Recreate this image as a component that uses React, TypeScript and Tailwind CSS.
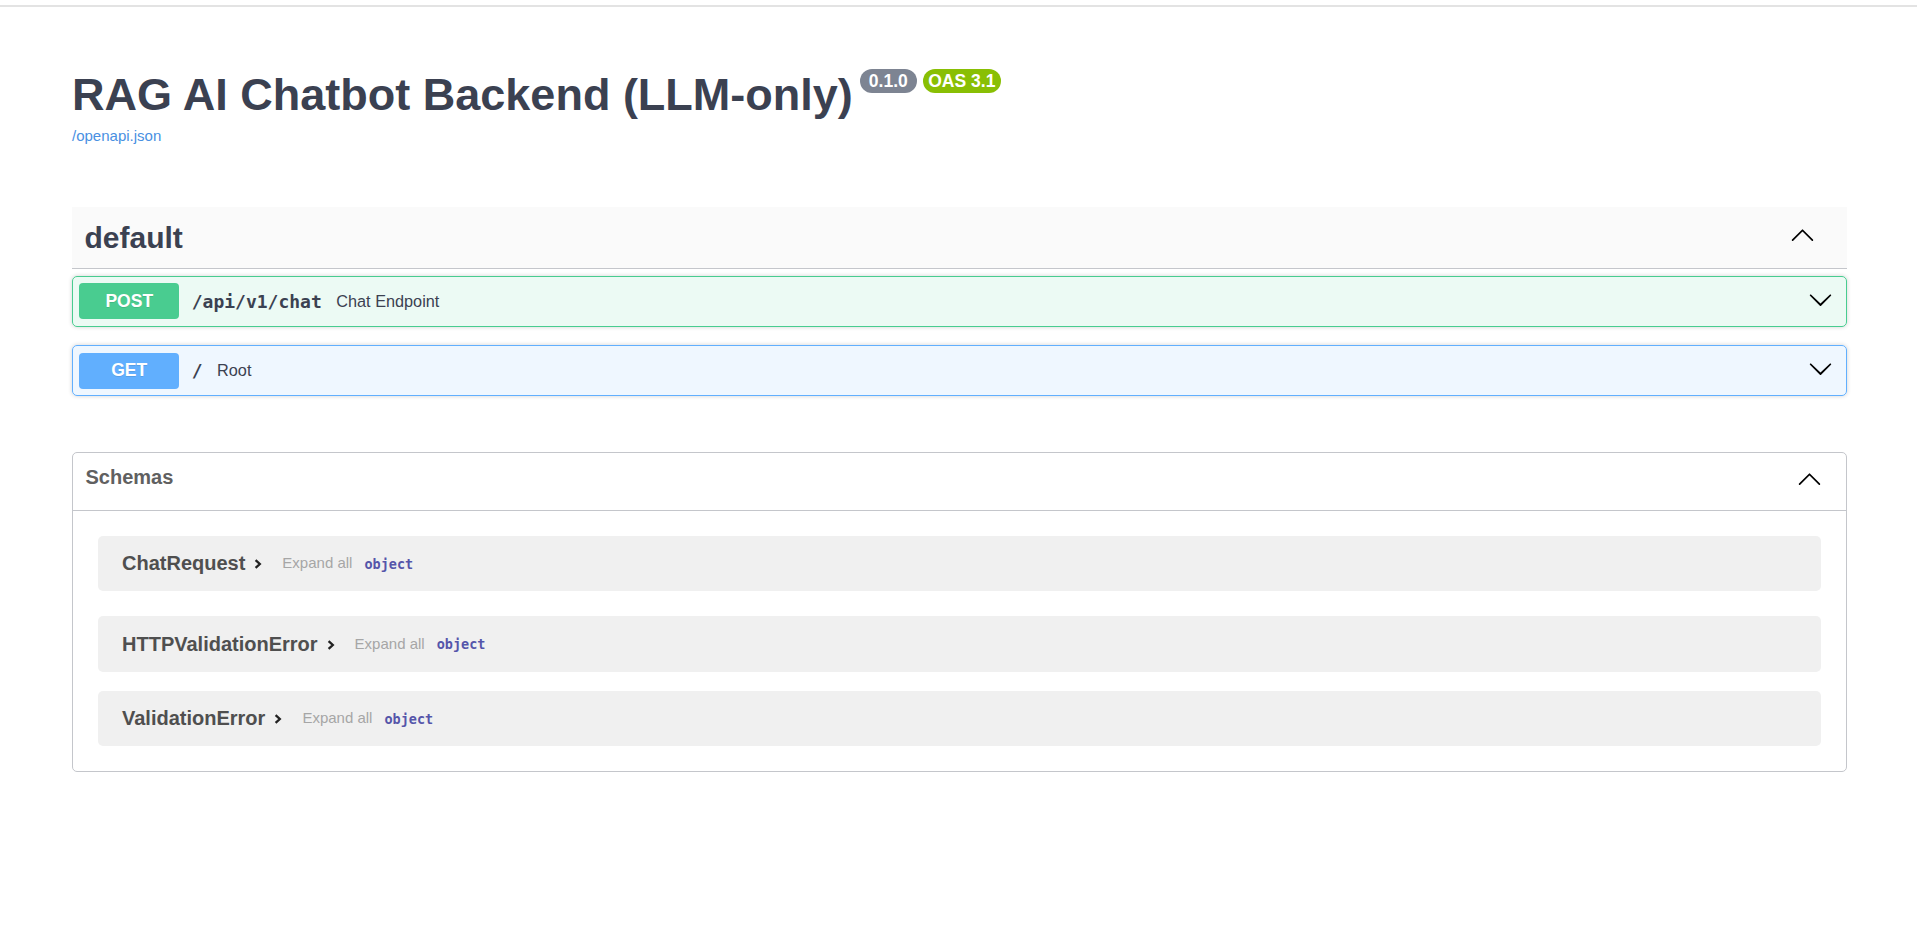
import React from "react"

const SANS = "font-['Liberation_Sans',Arial,sans-serif]"

const ArrowUp = () => (
  <svg width="25" height="25" viewBox="0 0 20 20" className="fill-black shrink-0">
    <path d="M17.418 14.908c.272.268.709.268.979 0s.271-.701 0-.969l-7.908-7.83a.697.697 0 0 0-.979 0l-7.908 7.83a.68.68 0 0 0 0 .969c.271.268.709.268.979 0L10 7.5l7.418 7.408z" />
  </svg>
)

const ArrowDown = () => (
  <svg width="25" height="25" viewBox="0 0 20 20" className="fill-black shrink-0">
    <path d="M17.418 6.109c.272-.268.709-.268.979 0s.271.701 0 .969l-7.908 7.83a.697.697 0 0 1-.979 0l-7.908-7.83c-.27-.268-.27-.701 0-.969.271-.268.709-.268.979 0L10 13.25l7.418-7.141z" />
  </svg>
)

const ops = [
  {
    method: "POST",
    path: "/api/v1/chat",
    desc: "Chat Endpoint",
    box: "border-[#49cc90] bg-[#49cc90]/10",
    badge: "bg-[#49cc90]",
  },
  {
    method: "GET",
    path: "/",
    desc: "Root",
    box: "border-[#61affe] bg-[#61affe]/10",
    badge: "bg-[#61affe]",
  },
]

const schemas = [
  { name: "ChatRequest", gap: "mb-[25px]" },
  { name: "HTTPValidationError", gap: "mb-[18.75px]" },
  { name: "ValidationError", gap: "" },
]

function Operation({ op }: { op: (typeof ops)[number] }) {
  return (
    <div
      className={`flex items-center rounded-[5px] border p-[6.25px] shadow-[0_0_4px_rgba(0,0,0,0.19)] ${op.box}`}
    >
      <span
        className={`flex h-[36px] w-[100px] items-center justify-center rounded-[4px] text-[17.5px] font-bold text-white [text-shadow:0_1px_0_rgba(0,0,0,0.1)] ${op.badge}`}
      >
        {op.method}
      </span>
      <span className="pl-[12.5px] pr-[14.5px] font-['DejaVu_Sans_Mono',monospace] text-[18px] font-bold text-[#3b4151]">
        {op.path}
      </span>
      <span className="flex-1 text-[16.25px] text-[#3b4151]">{op.desc}</span>
      <span className="mr-[7px] -mt-[4px] flex">
        <ArrowDown />
      </span>
    </div>
  )
}

function SchemaRow({ name, gap }: { name: string; gap: string }) {
  return (
    <div className={`mx-[25px] flex h-[55.5px] items-center rounded-[5px] bg-[#f0f0f0] px-[24px] ${gap}`}>
      <span className="text-[20px] font-bold leading-[23px] text-[#4f4f4f]">{name}</span>
      <svg width="10" height="10" viewBox="0 0 10 10" className="ml-[8px] mt-[1px] shrink-0">
        <path d="M2.6 1.2 L6.8 5 L2.6 8.8" fill="none" stroke="#222" strokeWidth="2.3" />
      </svg>
      <span className="ml-[19px] text-[15px] text-[#a6a6a6]">Expand all</span>
      <span className="ml-[12px] mt-[1px] font-['DejaVu_Sans_Mono',monospace] text-[13.5px] font-bold text-[#5555aa]">
        object
      </span>
    </div>
  )
}

export default function App() {
  return (
    <div className={`min-h-screen bg-white ${SANS} text-[#3b4151]`}>
      <div className="mt-[5px] h-[2px] bg-[#e3e3e3]" />

      <main className="pl-[72px] pr-[70px]">
        <section className="mt-[62px]">
          <h2 className="flex items-start">
            <span className="text-[45px] font-bold leading-[52px] text-[#3b4151]">
              RAG AI Chatbot Backend (LLM-only)
            </span>
            <span className="ml-[7px] flex gap-[6px]">
              <span className="flex h-[24px] w-[57px] items-center justify-center rounded-full bg-[#7d8492] text-[17.5px] font-bold text-white">
                0.1.0
              </span>
              <span className="flex h-[24px] w-[78px] items-center justify-center rounded-full bg-[#89bf04] text-[17.5px] font-bold text-white">
                OAS 3.1
              </span>
            </span>
          </h2>
          <a href="#" className="mt-[6px] block text-[15px] leading-[17px] text-[#4990e2]">
            /openapi.json
          </a>
        </section>

        <section className="mt-[63px]">
          <div className="flex h-[62px] items-center border-b border-[#c4c6cb] bg-[#fafafa] pl-[12.5px] pr-[32px]">
            <h3 className="flex-1 text-[30px] font-bold text-[#3b4151]">default</h3>
            <span className="-mt-[6px] flex">
              <ArrowUp />
            </span>
          </div>
          <div className="mt-[7px] flex flex-col gap-[18.75px]">
            {ops.map((op) => (
              <Operation key={op.method} op={op} />
            ))}
          </div>
        </section>

        <section className="mt-[56px] rounded-[5px] border border-[#c4c6cb]">
          <div className="flex h-[58px] items-start justify-between border-b border-[#c4c6cb] pl-[12.5px] pr-[24px] pt-[13px]">
            <h4 className="text-[20px] font-bold leading-[23px] text-[#606060]">Schemas</h4>
            <ArrowUp />
          </div>
          <div className="pb-[25px] pt-[25px]">
            {schemas.map((s) => (
              <SchemaRow key={s.name} name={s.name} gap={s.gap} />
            ))}
          </div>
        </section>
      </main>
    </div>
  )
}
